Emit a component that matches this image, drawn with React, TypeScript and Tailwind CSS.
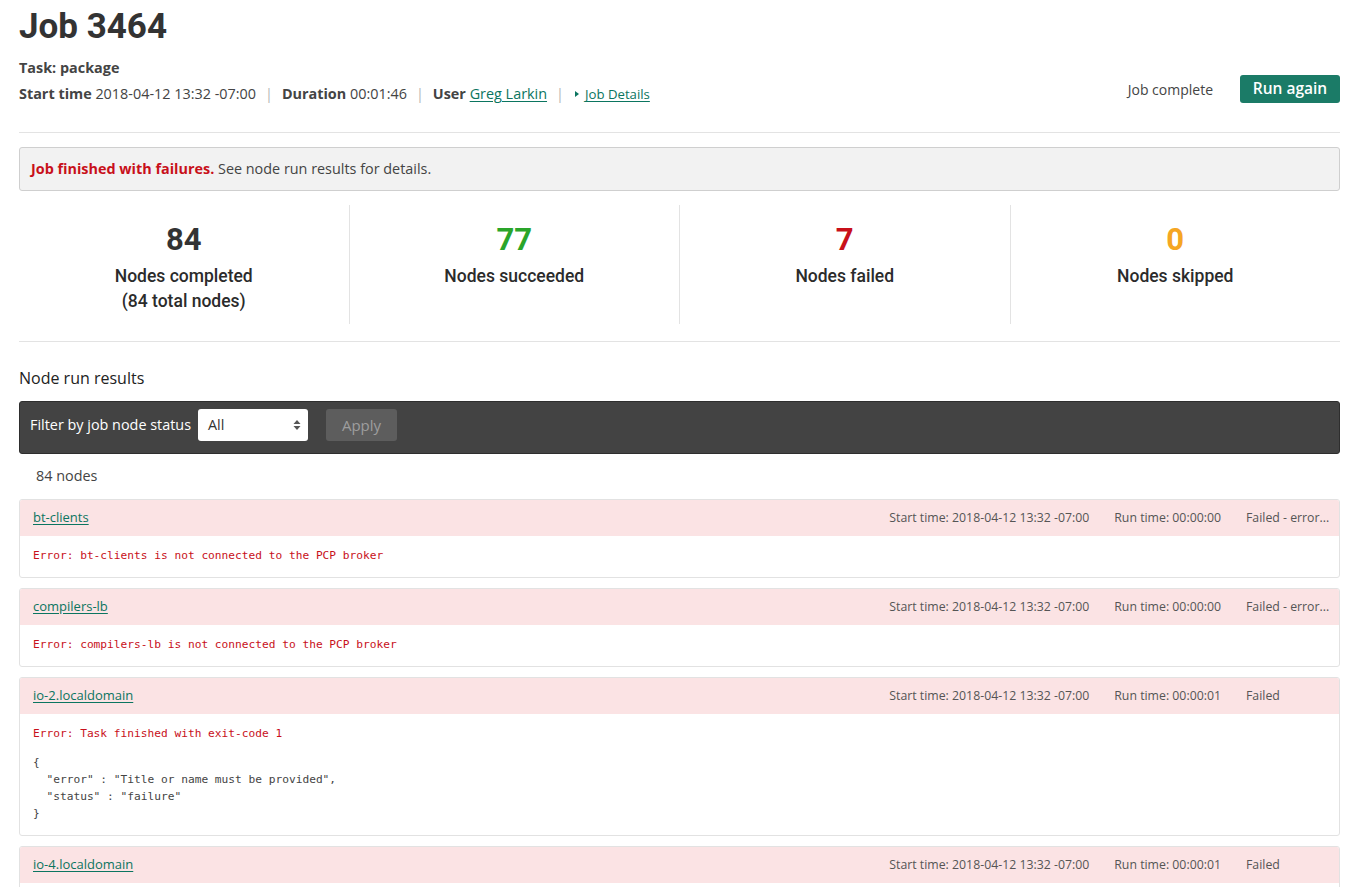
const body = { fontFamily: '"Open Sans", "Liberation Sans", sans-serif' };
const head = { fontFamily: 'Roboto, "Liberation Sans", sans-serif' };
const mono = { fontFamily: '"DejaVu Sans Mono", "Liberation Mono", monospace' };

type NodeRun = {
  name: string;
  runTime: string;
  status: string;
  error: string;
  output?: string[];
};

const nodes: NodeRun[] = [
  {
    name: "bt-clients",
    runTime: "00:00:00",
    status: "Failed - error...",
    error: "Error: bt-clients is not connected to the PCP broker",
  },
  {
    name: "compilers-lb",
    runTime: "00:00:00",
    status: "Failed - error...",
    error: "Error: compilers-lb is not connected to the PCP broker",
  },
  {
    name: "io-2.localdomain",
    runTime: "00:00:01",
    status: "Failed",
    error: "Error: Task finished with exit-code 1",
    output: [
      "{",
      '  "error" : "Title or name must be provided",',
      '  "status" : "failure"',
      "}",
    ],
  },
  {
    name: "io-4.localdomain",
    runTime: "00:00:01",
    status: "Failed",
    error: "Error: Task finished with exit-code 1",
    output: ["{", '  "error" : "Title or name must be provided",', '  "status" : "failure"', "}"],
  },
];

function Sep() {
  return <span className="px-[9px] text-[#b5b5b5]">|</span>;
}

function Stat({ value, color, label, sub }: { value: string; color: string; label: string; sub?: string }) {
  return (
    <div className="flex-1 flex flex-col items-center pt-[17px] border-l border-[#e3e3e3] first:border-l-0" style={head}>
      <div className={`text-[31px] leading-[36px] font-bold ${color}`}>{value}</div>
      <div className="mt-[6px] text-[17.5px] leading-[25px] font-medium text-[#2b2b2b]">{label}</div>
      {sub && <div className="text-[17.5px] leading-[25px] font-medium text-[#2b2b2b]">{sub}</div>}
    </div>
  );
}

function NodeCard({ node }: { node: NodeRun }) {
  return (
    <div className="border border-[#e2e2e2] rounded-[3px] overflow-hidden bg-white">
      <div className="h-[36px] bg-[#fbe3e4] flex items-center pl-[13px] pr-[10px] text-[13px]">
        <a href="#" className="text-[#0b7560] underline underline-offset-2">
          {node.name}
        </a>
        <div className="ml-auto flex items-center gap-[25px] text-[12.3px] text-[#555]">
          <span>Start time: 2018-04-12 13:32 -07:00</span>
          <span>Run time: {node.runTime}</span>
          <span className="w-[83px] whitespace-nowrap">{node.status}</span>
        </div>
      </div>
      <div className="pl-[13px] pt-[11px] pb-[13px] text-[11.2px] leading-[17px]" style={mono}>
        <div className="text-[#c8101a]">{node.error}</div>
        {node.output && (
          <pre className="mt-[12px] text-[#444] leading-[17px]" style={mono}>
            {node.output.join("\n")}
          </pre>
        )}
      </div>
    </div>
  );
}

export default function App() {
  return (
    <div className="h-[887px] overflow-hidden bg-white text-[#333] pl-[19px] pr-[16px]" style={body}>
      {/* header */}
      <div className="flex items-end justify-between pt-[5px]">
        <div>
          <h1 className="text-[35px] leading-[44px] font-bold text-[#333]" style={head}>
            Job 3464
          </h1>
          <div className="mt-[9px] text-[14.4px] leading-[20px] font-bold text-[#444]">Task: package</div>
          <div className="mt-[6px] text-[14.4px] leading-[20px] text-[#444] flex items-center">
            <b>Start time</b>&nbsp;2018-04-12 13:32 -07:00
            <Sep />
            <b>Duration</b>&nbsp;00:01:46
            <Sep />
            <b>User</b>&nbsp;
            <a href="#" className="text-[#0b7560] underline underline-offset-2">
              Greg Larkin
            </a>
            <Sep />
            <svg width="6" height="8" viewBox="0 0 6 8" className="mr-[5px] ml-[1px]">
              <path d="M1 1 L5 4 L1 7 Z" fill="#0b7560" />
            </svg>
            <a href="#" className="text-[13.2px] text-[#0b7560] underline underline-offset-2">
              Job Details
            </a>
          </div>
        </div>
        <div className="flex items-center gap-[27px] mb-[1px]">
          <span className="text-[14px] text-[#444]">Job complete</span>
          <button className="h-[28px] w-[100px] rounded-[3px] bg-[#1b7b67] text-white text-[15.5px] font-semibold">
            Run again
          </button>
        </div>
      </div>

      <div className="mt-[28px] border-t border-[#e3e3e3]" />

      {/* alert */}
      <div className="mt-[14px] h-[44px] bg-[#f2f2f2] border border-[#cfcfcf] rounded-[3px] flex items-center pl-[11px] text-[14.4px] text-[#444]">
        <b className="text-[#c8101a]">Job finished with failures.</b>&nbsp;See node run results for details.
      </div>

      {/* stats */}
      <div className="mt-[14px] h-[119px] flex">
        <Stat value="84" color="text-[#333]" label="Nodes completed" sub="(84 total nodes)" />
        <Stat value="77" color="text-[#2aa52a]" label="Nodes succeeded" />
        <Stat value="7" color="text-[#c8101a]" label="Nodes failed" />
        <Stat value="0" color="text-[#f5a623]" label="Nodes skipped" />
      </div>

      <div className="mt-[17px] border-t border-[#e3e3e3]" />

      <h2 className="mt-[24px] text-[16px] leading-[24px] text-[#222]">Node run results</h2>

      {/* filter bar */}
      <div className="mt-[11px] h-[53px] bg-[#434343] border border-[#2e2e2e] rounded-[3px] flex items-start pt-[7px] pl-[10px]">
        <span className="text-white text-[14.4px] leading-[32px]">Filter by job node status</span>
        <div className="ml-[7px] w-[110px] h-[32px] bg-white rounded-[3px] flex items-center justify-between pl-[10px] pr-[7px] text-[14.4px] text-[#333]">
          All
          <svg width="8" height="12" viewBox="0 0 8 12">
            <path d="M4 1 L7.5 5 L0.5 5 Z M4 11 L7.5 7 L0.5 7 Z" fill="#555" />
          </svg>
        </div>
        <button className="ml-[18px] w-[71px] h-[32px] rounded-[3px] bg-[#5d5d5d] text-[#9d9d9d] text-[15px]">
          Apply
        </button>
      </div>

      <div className="mt-[12px] pl-[17px] text-[14.4px] leading-[20px] text-[#444]">84 nodes</div>

      <div className="mt-[13px] flex flex-col gap-[10px]">
        {nodes.map((n) => (
          <NodeCard key={n.name} node={n} />
        ))}
      </div>
    </div>
  );
}
